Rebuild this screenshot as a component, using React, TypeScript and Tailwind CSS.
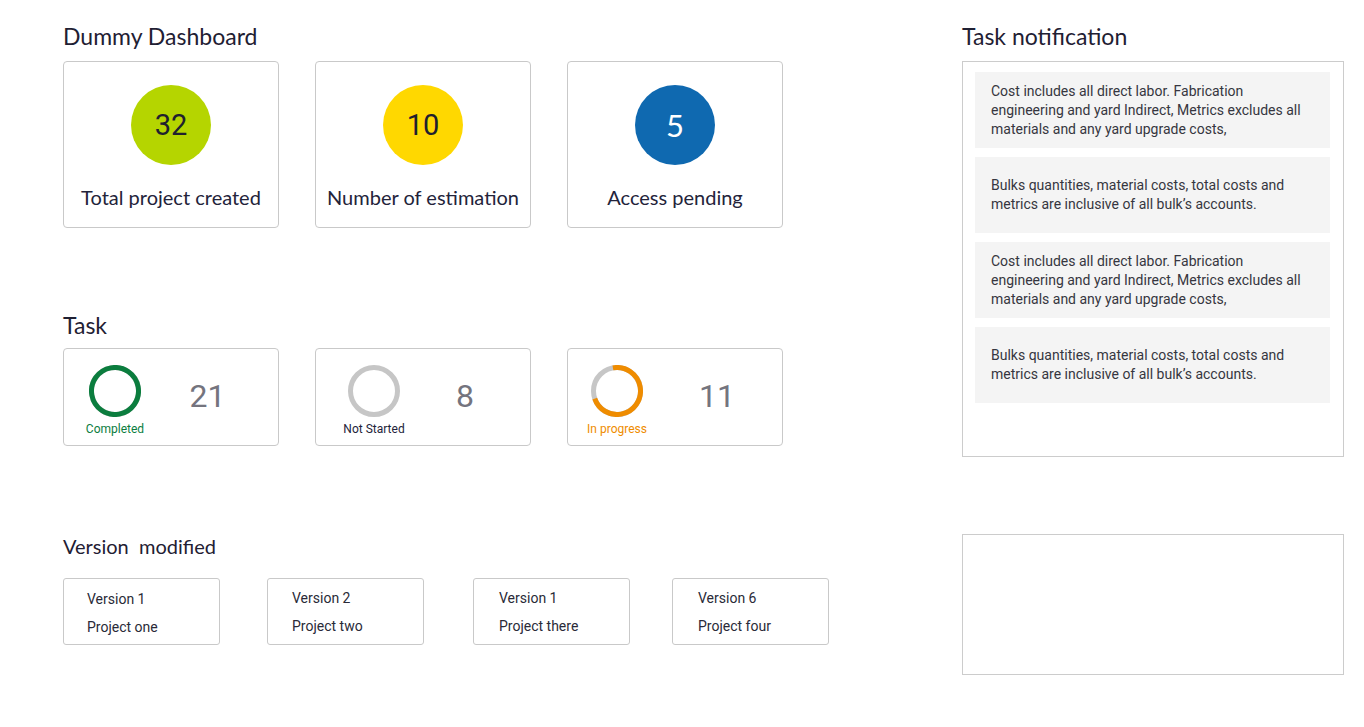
import type { ReactNode } from "react";

const stats = [
  { value: "32", label: "Total project created", bg: "bg-[#b5d500]", text: "text-[#20202e] font-['Roboto',sans-serif] text-[29px]" },
  { value: "10", label: "Number of estimation", bg: "bg-[#ffd800]", text: "text-[#20202e] font-['Roboto',sans-serif] text-[29px]" },
  { value: "5", label: "Access pending", bg: "bg-[#0f69b0]", text: "text-white font-['Lato',sans-serif] text-[31px]" },
];

const tasks = [
  { count: "21", label: "Completed", labelColor: "text-[#0b7d3e]", color: "#0b7d3e", progress: 1, pad: "pl-[14px]", numW: "w-[111px]" },
  { count: "8", label: "Not Started", labelColor: "text-[#23233a]", color: "#c6c6c6", progress: 0, pad: "pl-[21px]", numW: "w-[108px]" },
  { count: "11", label: "In progress", labelColor: "text-[#ef8c00]", color: "#ef8c00", progress: 0.72, pad: "pl-[12px]", numW: "w-[126px]" },
];

const versions = [
  { version: "Version 1", project: "Project one", cls: "pl-[23px] pt-[6px]" },
  { version: "Version 2", project: "Project two", cls: "ml-[47px] pl-[24px] pt-[5px]" },
  { version: "Version 1", project: "Project there", cls: "ml-[49px] pl-[25px] pt-[5px]" },
  { version: "Version 6", project: "Project four", cls: "ml-[42px] pl-[25px] pt-[5px]" },
];

const notes = [
  "Cost includes all direct labor. Fabrication engineering and yard Indirect, Metrics excludes all materials and any yard upgrade costs,",
  "Bulks quantities, material costs, total costs and metrics are inclusive of all bulk’s accounts.",
  "Cost includes all direct labor. Fabrication engineering and yard Indirect, Metrics excludes all materials and any yard upgrade costs,",
  "Bulks quantities, material costs, total costs and metrics are inclusive of all bulk’s accounts.",
];

function Heading({ children, className = "" }: { children: ReactNode; className?: string }) {
  return (
    <h2 className={`font-['Lato',sans-serif] leading-[28px] text-[#1f2033] ${className}`}>
      {children}
    </h2>
  );
}

function Ring({ color, progress }: { color: string; progress: number }) {
  const r = 23.5;
  const c = 2 * Math.PI * r;
  return (
    <svg width="52" height="52" viewBox="0 0 52 52">
      <circle cx="26" cy="26" r={r} fill="none" stroke="#c6c6c6" strokeWidth="5" />
      {progress > 0 && (
        <circle
          cx="26"
          cy="26"
          r={r}
          fill="none"
          stroke={color}
          strokeWidth="5"
          strokeDasharray={`${c * progress} ${c}`}
          transform="rotate(-100 26 26)"
        />
      )}
    </svg>
  );
}

export default function App() {
  return (
    <div className="min-h-screen bg-white flex pl-[63px] pr-[20px] pt-[22px] font-['Roboto',sans-serif]">
      {/* Left column */}
      <div className="flex-1">
        <Heading className="text-[23px] mb-[11px]">Dummy Dashboard</Heading>
        <div className="flex gap-[36px]">
          {stats.map((s) => (
            <div
              key={s.label}
              className="w-[216px] h-[167px] border border-[#c9c9c9] rounded-[4px] flex flex-col items-center pt-[23px]"
            >
              <div className={`w-[80px] h-[80px] rounded-full flex items-center justify-center ${s.bg}`}>
                <span className={`leading-none ${s.text}`}>{s.value}</span>
              </div>
              <div className="mt-[18px] font-['Lato',sans-serif] text-[20px] leading-[28px] text-[#23233a]">
                {s.label}
              </div>
            </div>
          ))}
        </div>

        <Heading className="text-[23px] mt-[83px] mb-[9px]">Task</Heading>
        <div className="flex gap-[36px]">
          {tasks.map((t) => (
            <div
              key={t.label}
              className={`w-[216px] h-[98px] border border-[#c9c9c9] rounded-[4px] flex items-start pt-[16px] ${t.pad}`}
            >
              <div className="w-[74px] flex flex-col items-center">
                <Ring color={t.color} progress={t.progress} />
                <div className={`mt-[4px] text-[12px] leading-[16px] whitespace-nowrap ${t.labelColor}`}>{t.label}</div>
              </div>
              <div className={`${t.numW} mt-[13px] text-center text-[32px] leading-[36px] text-[#74747e]`}>{t.count}</div>
            </div>
          ))}
        </div>

        <Heading className="text-[20px] mt-[86px] mb-[18px]">Version&nbsp; modified</Heading>
        <div className="flex">
          {versions.map((v, i) => (
            <div
              key={i}
              className={`w-[157px] h-[67px] border border-[#c9c9c9] rounded-[3px] text-[14px] leading-[28px] text-[#2a2a38] ${v.cls}`}
            >
              <div>{v.version}</div>
              <div>{v.project}</div>
            </div>
          ))}
        </div>
      </div>

      {/* Right column */}
      <div className="w-[382px]">
        <Heading className="text-[23px] mb-[11px]">Task notification</Heading>
        <div className="h-[396px] border border-[#cccccc] pt-[10px] pl-[12px] pr-[13px] flex flex-col gap-[9px]">
          {notes.map((n, i) => (
            <div
              key={i}
              className="h-[76px] bg-[#f4f4f4] flex items-center pl-[16px] pr-[20px] text-[14px] leading-[19px] text-[#363640]"
            >
              <p>{n}</p>
            </div>
          ))}
        </div>
        <div className="mt-[77px] h-[141px] border border-[#cccccc]" />
      </div>
    </div>
  );
}
